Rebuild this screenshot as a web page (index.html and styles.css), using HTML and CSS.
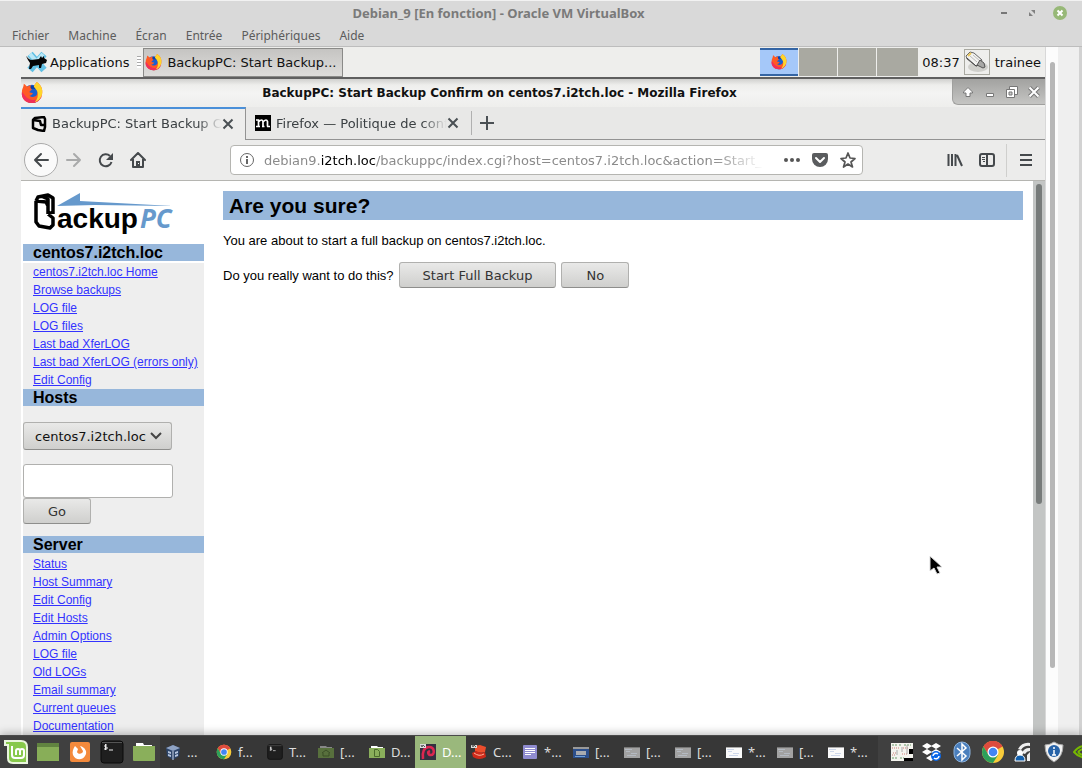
FILE: index.html
```html
<!DOCTYPE html>
<html lang="fr">
  <head>
    <meta charset="utf-8">
    <title>Debian_9 [En fonction] - Oracle VM VirtualBox</title>
    <link rel="stylesheet" href="styles.css">
  </head>

  <body>
    <!-- shared icons -->
    <svg class="defs" width="0" height="0">
      <symbol id="firefox" viewBox="0 0 24 24">
        <circle cx="12" cy="13" r="10" fill="#1a5fd0"/>
        <path d="M9 5c4-2 8 0 9 3-3-1-6-1-8 0z" fill="#0b3fa8"/>
        <path d="M3 2c2 1 3 3 4 3l4-2c-1 2-1 4 1 5l-3 3c1 1 3 1 4 1-1 3-4 3-4 3 4 3 9 1 9-4 0-4-3-5-4-6 1-3 3-4 3-5 5 3 7 8 6 13-1 6-6 10-11 10C5 23 0 18 1 11c0-4 2-5 2-9z" fill="#ff5a24"/>
        <path d="M1 11c-1 7 4 12 11 12 5 0 9-3 11-8-4 5-10 6-15 3-4-2-5-6-7-7z" fill="#f0305a"/>
        <path d="M14 5c1-3 3-4 3-5 5 3 7 8 6 13-1 4-4 8-8 9 3-3 4-7 3-11-1-3-3-4-4-6z" fill="#ffd52b"/>
      </symbol>
      <symbol id="chrome" viewBox="0 0 24 24">
        <circle cx="12" cy="12" r="11" fill="#f8cb3a"/>
        <path d="M12 12L2.500 6.500A11 11 0 0 1 21.500 6.500z" fill="#dd4b3e"/>
        <path d="M12 6.500h9.500A11 11 0 0 0 2.500 6.500L7 14z" fill="#dd4b3e"/>
        <path d="M2.500 6.500A11 11 0 0 0 12 23l5-8-5 2-5-3z" fill="#2da05a"/>
        <circle cx="12" cy="12" r="5.500" fill="#fff"/>
        <circle cx="12" cy="12" r="4.300" fill="#4285f4"/>
      </symbol>
      <symbol id="terminal" viewBox="0 0 24 24">
        <rect x="1" y="1" width="22" height="22" rx="3" fill="#1f1f1f" stroke="#0a0a0a"/>
        <path d="M2 2.500h20" stroke="#555"/>
        <path d="M7 5H5v2h2v2H4M5.500 4v6M9 10h4" fill="none" stroke="#eee"/>
      </symbol>
      <symbol id="window" viewBox="0 0 16 16">
        <path fill="#a2a2a2" d="M0 3h16v11H0z"/>
        <path d="M0 3.500h16" stroke="#777"/>
        <path d="M1 5.500h7M2 7.500h4M7 9.500h6M3 11.500h9" stroke="#b4bac2"/>
      </symbol>
      <symbol id="window-lit" viewBox="0 0 16 16">
        <path fill="#fafafa" d="M0 3h16v11H0z"/>
        <path d="M0 3.500h16" stroke="#aaa"/>
        <path d="M1 5.500h7M2 7.500h4M7 9.500h6M3 11.500h9" stroke="#cdd7ea"/>
      </symbol>
      <symbol id="close" viewBox="0 0 12 12">
        <path d="M1.500 1.500l9 9M10.500 1.500l-9 9" stroke="#4a5054" stroke-width="2"/>
      </symbol>
    </svg>

    <div class="screen">
      <header class="vm-header">
        <div class="vm-titlebar">
          <div class="vm-title">Debian_9 [En fonction] - Oracle VM VirtualBox</div>
          <div class="vm-buttons">
            <button aria-label="Réduire"><svg width="14" height="14" viewBox="0 0 14 14"><path d="M4 7h6" stroke="#777" stroke-width="2"/></svg></button>
            <button aria-label="Agrandir"><svg width="14" height="14" viewBox="0 0 14 14"><path d="M6 4h4v4zM4 6v4h4z" fill="#808080"/></svg></button>
            <button aria-label="Fermer"><svg width="14" height="14" viewBox="0 0 14 14"><circle cx="7" cy="7" r="7" fill="#97b877"/><path d="M4.500 4.500l5 5M9.500 4.500l-5 5" stroke="#fff" stroke-width="2"/></svg></button>
          </div>
        </div>
        <nav class="vm-menu">
          <a href="#">Fichier</a>
          <a href="#">Machine</a>
          <a href="#">Écran</a>
          <a href="#">Entrée</a>
          <a href="#">Périphériques</a>
          <a href="#">Aide</a>
        </nav>
      </header>

      <div class="vm-body">
        <div class="guest">
          <!-- xfce panel -->
          <div class="panel">
            <button class="app-menu">
              <svg width="24" height="24" viewBox="0 0 24 24">
                <path d="M5 4l14 16M19 4L5 20" stroke="#62c0e4" stroke-width="7"/>
                <path d="M5 4l6 7M18 4l-5 6" stroke="#b9e8f7" stroke-width="4"/>
                <path d="M1 6l3 3 2 1 8-1 2-3 1 2 2-2v2l3 2-1 3-4 1-1 4h-2v-3l-6 1-2 3H4l1-6-2-3z" fill="#050505"/>
              </svg>
              Applications
            </button>
            <span class="handle"></span>
            <button class="panel-task">
              <svg width="17" height="17"><use href="#firefox"/></svg>
              BackupPC: Start Backup...
            </button>
            <div class="pager">
              <span class="desk current"><svg width="16" height="16"><use href="#firefox"/></svg></span>
              <span class="desk"></span>
              <span class="desk"></span>
              <span class="desk"></span>
            </div>
            <span class="clock">08:37</span>
            <span class="plug">
              <svg width="24" height="24" viewBox="0 0 24 24">
                <ellipse cx="13" cy="17" rx="10" ry="5" fill="#cfcfcb"/>
                <path d="M1 6l4-4 4 1 8 7-3 5-3 1-9-7z" fill="#f2f2f0" stroke="#666"/>
                <path d="M2 8l9 8 3-1" fill="none" stroke="#444"/>
                <path d="M5 6l7 6M8 5l7 6" stroke="#bbb"/>
                <path d="M15 10l4 3 1 4-2 1-6-3z" fill="#a8a8a6" stroke="#555"/>
                <path d="M3 6l3-3" stroke="#e8c65a" stroke-width="2"/>
              </svg>
            </span>
            <span class="user">trainee</span>
          </div>

          <!-- firefox window -->
          <div class="win-titlebar">
            <svg class="win-icon" width="22" height="22"><use href="#firefox"/></svg>
            <div class="win-title">BackupPC: Start Backup Confirm on centos7.i2tch.loc - Mozilla Firefox</div>
            <div class="win-buttons">
              <svg width="14" height="14" viewBox="0 0 14 14"><path d="M7 2.500l4.500 4.500v1H9v3.500H5V8H2.500V7z" fill="#fff" stroke="#777"/></svg>
              <svg width="14" height="14" viewBox="0 0 14 14"><path d="M3.500 8.500h7v3h-7z" fill="#fff" stroke="#777"/></svg>
              <svg width="14" height="14" viewBox="0 0 14 14"><path d="M4.500 1.500h8v8h-8z" fill="#fff" stroke="#777"/><path d="M1.500 4.500h8v8h-8z" fill="#fff" stroke="#777"/><path d="M4 7h3v3H4z" fill="#ccc" stroke="#777"/></svg>
              <svg width="14" height="14" viewBox="0 0 14 14"><path d="M2.500 2.500l9 9M11.500 2.500l-9 9" stroke="#777" stroke-width="4"/><path d="M2.500 2.500l9 9M11.500 2.500l-9 9" stroke="#fff" stroke-width="2"/></svg>
            </div>
          </div>

          <div class="tabs">
            <div class="tab active">
              <svg width="16" height="16" viewBox="0 0 16 16"><path d="M2 4l2-2 9-1 1 2v8l-1 4-6-1-5-2zM2 4l7 1 1 4h3" fill="none" stroke="#000" stroke-width="2.500" stroke-linejoin="round"/></svg>
              <span class="tab-label">BackupPC: Start Backup C</span>
              <button aria-label="Fermer l'onglet"><svg width="12" height="12"><use href="#close"/></svg></button>
            </div>
            <div class="tab">
              <svg width="16" height="16" viewBox="0 0 16 16"><path d="M0 0h16v16H0z"/><path d="M1 5h2.500v6M1 11.500h4M4 6.500q3-3 4 0v5M7 11.500h2.500M8.500 6.500q3-3 4 0v5M12 11.500h3" fill="none" stroke="#fff" stroke-width="1.700"/></svg>
              <span class="tab-label">Firefox — Politique de conf</span>
              <button aria-label="Fermer l'onglet"><svg width="12" height="12"><use href="#close"/></svg></button>
            </div>
            <div class="tab-rest">
              <button class="new-tab" aria-label="Nouvel onglet"><svg width="14" height="14" viewBox="0 0 14 14"><path d="M7 0v14M0 7h14" stroke="#4a5054" stroke-width="2"/></svg></button>
            </div>
          </div>

          <div class="toolbar">
            <button class="tool back" aria-label="Précédent"><svg width="16" height="16" viewBox="0 0 16 16"><path d="M15 8H2M8 2L2 8l6 6" fill="none" stroke="#45494c" stroke-width="2" stroke-linejoin="round" stroke-linecap="round"/></svg></button>
            <button class="tool" aria-label="Suivant"><svg width="16" height="16" viewBox="0 0 16 16"><path d="M1 8h13M8 2l6 6-6 6" fill="none" stroke="#a9aaaa" stroke-width="2" stroke-linejoin="round" stroke-linecap="round"/></svg></button>
            <button class="tool" aria-label="Actualiser"><svg width="16" height="16" viewBox="0 0 16 16"><path d="M13.500 10A6 6 0 1 1 12 4" fill="none" stroke="#45494c" stroke-width="2"/><path d="M15 1v7H8z" fill="#45494c"/></svg></button>
            <button class="tool" aria-label="Accueil"><svg width="16" height="16" viewBox="0 0 16 16"><path d="M1 8l7-7 7 7M3 7v8h10V7" fill="none" stroke="#45494c" stroke-width="2" stroke-linejoin="round" stroke-linecap="round"/><path d="M6 9h4v5H6z" fill="#45494c"/><path d="M8 11h1v1H8z" fill="#fff"/></svg></button>

            <div class="urlbar">
              <svg width="16" height="16" viewBox="0 0 16 16"><circle cx="8" cy="8" r="6.500" fill="none" stroke="#666"/><path d="M8 4v2M8 7v5" stroke="#666" stroke-width="2"/></svg>
              <a class="url" href="#">debian9.<b>i2tch.loc</b>/backuppc/index.cgi?host=centos7.i2tch.loc&amp;action=Start_</a>
              <svg width="16" height="16" viewBox="0 0 16 16"><circle cx="2" cy="8" r="2" fill="#555"/><circle cx="8" cy="8" r="2" fill="#555"/><circle cx="14" cy="8" r="2" fill="#555"/></svg>
              <svg width="16" height="16" viewBox="0 0 16 16"><path d="M2 1h12q2 0 2 2v4a8 8 0 0 1-16 0V3q0-2 2-2z" fill="#5a5c5e"/><path d="M4 6l4 4 4-4" fill="none" stroke="#fff" stroke-width="2" stroke-linecap="round" stroke-linejoin="round"/></svg>
              <svg width="16" height="16" viewBox="0 0 16 16"><path d="M8 1l2 5 5 .5-4 3.500 1.500 5L8 12l-4.500 3L5 10 1 6.500 6 6z" fill="none" stroke="#555" stroke-width="1.700" stroke-linejoin="round"/></svg>
            </div>

            <button class="tool" aria-label="Bibliothèque"><svg width="16" height="16" viewBox="0 0 16 16"><path d="M1.500 2v12M5 2v12M8.500 2v12M10 3l5 11" stroke="#45494c" stroke-width="2"/></svg></button>
            <button class="tool" aria-label="Barre latérale"><svg width="16" height="16" viewBox="0 0 16 16"><rect x="1" y="2" width="14" height="12" rx="2" fill="none" stroke="#45494c" stroke-width="2"/><path d="M8 2v12" stroke="#45494c" stroke-width="2"/><path d="M3 5.500h3M3 7.500h3M4 9.500h2" stroke="#45494c"/></svg></button>
            <span class="tool-sep"></span>
            <button class="tool" aria-label="Menu"><svg width="16" height="16" viewBox="0 0 16 16"><path d="M2 3h12M2 8h12M2 13h12" stroke="#45494c" stroke-width="2"/></svg></button>
          </div>

          <div class="page">
            <aside class="sidebar">
              <svg class="logo" width="142" height="44" viewBox="0 0 142 44">
                <path d="M24 14L47 1v8l93 5-78-1z" fill="#6699cc"/>
                <path d="M3 9l2-4 10-2 5 3v16M3 9v21l3 4 11 2 3-3v-7l-5-4M3 9l10 1 2 4v8M15 22l5-2M8 4l7 3v7" fill="none" stroke="#000" stroke-width="3.500" stroke-linejoin="round"/>
                <text class="logo-name" x="24" y="36">ackup</text>
                <text class="logo-pc" x="107" y="36">PC</text>
              </svg>
              <h2 class="nav-title host">centos7.i2tch.loc</h2>
              <ul class="nav-links">
                <li><a href="#">centos7.i2tch.loc Home</a></li>
                <li><a href="#">Browse backups</a></li>
                <li><a href="#">LOG file</a></li>
                <li><a href="#">LOG files</a></li>
                <li><a href="#">Last bad XferLOG</a></li>
                <li><a href="#">Last bad XferLOG (errors only)</a></li>
                <li><a href="#">Edit Config</a></li>
              </ul>
              <h2 class="nav-title">Hosts</h2>
              <form class="host-form">
                <div class="select-wrap">
                  <select aria-label="Select a host">
                    <option>centos7.i2tch.loc</option>
                  </select>
                  <svg width="12" height="8" viewBox="0 0 12 8"><path d="M1 1l5 5 5-5" fill="none" stroke="#444" stroke-width="2"/></svg>
                </div>
                <input type="text" aria-label="Host name">
                <button class="btn" type="button">Go</button>
              </form>
              <h2 class="nav-title">Server</h2>
              <ul class="nav-links server">
                <li><a href="#">Status</a></li>
                <li><a href="#">Host Summary</a></li>
                <li><a href="#">Edit Config</a></li>
                <li><a href="#">Edit Hosts</a></li>
                <li><a href="#">Admin Options</a></li>
                <li><a href="#">LOG file</a></li>
                <li><a href="#">Old LOGs</a></li>
                <li><a href="#">Email summary</a></li>
                <li><a href="#">Current queues</a></li>
                <li><a href="#">Documentation</a></li>
              </ul>
            </aside>

            <main class="content">
              <h1>Are you sure?</h1>
              <p>You are about to start a full backup on centos7.i2tch.loc.</p>
              <form class="confirm">
                <span>Do you really want to do this?</span>
                <button class="btn" type="button">Start Full Backup</button>
                <button class="btn" type="button">No</button>
              </form>
            </main>

            <div class="page-scroll"><span class="thumb"></span></div>

            <svg class="cursor" width="14" height="22" viewBox="0 0 14 22"><path d="M1 1v15l4-3 3 6 3-1-3-6h5z" stroke="#ddd"/></svg>
          </div>
        </div>

        <div class="vm-scroll"><span class="thumb"></span></div>
        <div class="vm-edge"></div>
      </div>

      <footer class="taskbar">
        <div class="launchers">
          <svg width="24" height="24" viewBox="0 0 24 24"><path d="M1 1h16q6 0 6 6v16H9q-5 0-5-5V5H1z" fill="#87c94b" stroke="#e9f5dd" stroke-width="2"/><path d="M8 6v9q0 3 3 3h6q3 0 3-3v-4q0-2-2-2t-2 2v4M16 11q0-2-2-2t-2 2v4" fill="none" stroke="#fff" stroke-width="2"/></svg>
          <svg width="24" height="24" viewBox="0 0 24 24"><path d="M1 3h22v18H1z" fill="#88ae58"/><path d="M1 3h22v4H1z" fill="#618340"/></svg>
          <svg width="24" height="24" viewBox="0 0 24 24"><rect x="2" y="2" width="20" height="20" rx="2" fill="#f48a3c"/><path d="M7 6l3 3-1 3c1 3 6 2 6-1l-3-5c5 1 8 6 5 10-3 5-10 4-12-1-1-3 0-6 2-9z" fill="#fff"/></svg>
          <svg width="24" height="24"><use href="#terminal"/></svg>
          <svg width="24" height="24" viewBox="0 0 24 24"><path d="M4 7V3h7l1 2h8v3z" fill="#fff"/><path d="M1 6h22v14q0 1-1 1H2q-1 0-1-1z" fill="#8aaf5b"/></svg>
        </div>

        <div class="tasks">
          <button><svg width="16" height="16" viewBox="0 0 16 16"><path d="M1 4l7-3 7 3-1 8-6 4-6-4z" fill="#2c4468"/><path d="M1 4l7 3 7-3-7-3z" fill="#8fa3c4"/><path d="M8 7v9" stroke="#c8d4e8"/><path d="M3 7l3 1v2l-3-1zM3 10l3 1v2l-3-1zM13 7l-3 1v2l3-1zM13 10l-3 1v2l3-1z" fill="#b6c5de"/></svg><span>...</span></button>
          <button><svg width="16" height="16"><use href="#chrome"/></svg><span>f...</span></button>
          <button><svg width="16" height="16"><use href="#terminal"/></svg><span>T...</span></button>
          <button><svg width="16" height="16" viewBox="0 0 16 16"><path d="M2 4V2h6l1 1h5v2z" fill="#888"/><path d="M0 4h16v10H0z" fill="#58703d"/><path d="M4 9l4-3 4 3M5 9v3h6V9" fill="none" stroke="#3b4e27"/></svg><span>[...</span></button>
          <button><svg width="16" height="16" viewBox="0 0 16 16"><path d="M2 4V2h6l1 1h5v2z" fill="#fff"/><path d="M0 4h16v10H0z" fill="#8aaf5b"/><path d="M5.500 5.500h3l2 2v5h-5z" fill="none" stroke="#4a6a2b"/></svg><span>D...</span></button>
          <button class="active"><svg width="16" height="16" viewBox="0 0 16 16"><path d="M0 0h16v16H0z" fill="#323040"/><path d="M3 15C2 8 4 3 9 3c6 0 6 8 2 8-3 0-4-3-1-4" fill="none" stroke="#dc2750" stroke-width="2.500"/><path d="M0 0h6v4H0z" fill="#ddd"/><path d="M1 1l1 2 1-2 2 2" fill="none" stroke="#555"/></svg><span>D...</span></button>
          <button><svg width="16" height="16" viewBox="0 0 16 16"><path d="M4 2l5-1 6 2-1 5q-5 2-10-1z" fill="#ed4d2c"/><path d="M1 9l4-2q5 3 9 1l1 5q-7 4-13 0z" fill="#cf2a1a"/><path d="M3 9q5 4 10 1" fill="none" stroke="#ffb29a"/><path d="M0 1h6v3H0z" fill="#ddd"/><path d="M1 1l1 2 1-2 2 2" fill="none" stroke="#555"/></svg><span>C...</span></button>
          <button><svg width="16" height="16" viewBox="0 0 16 16"><rect x="1" y="1" width="14" height="14" rx="1" fill="#8f8bd0"/><path d="M3 4.500h10M3 6.500h10M3 8.500h10M3 10.500h6" stroke="#fff"/></svg><span>*...</span></button>
          <button><svg width="16" height="16" viewBox="0 0 16 16"><path d="M0 3h16v11H0z" fill="#2c4f8b"/><path d="M0 4h16" stroke="#999" stroke-width="2"/><path d="M3 7h10v4H3z" fill="#a8abb0"/><path d="M2 12.500h10" stroke="#6fa0d8"/></svg><span>[...</span></button>
          <button><svg width="16" height="16"><use href="#window"/></svg><span>[...</span></button>
          <button><svg width="16" height="16"><use href="#window"/></svg><span>[...</span></button>
          <button><svg width="16" height="16"><use href="#window-lit"/></svg><span>*...</span></button>
          <button><svg width="16" height="16"><use href="#window"/></svg><span>[...</span></button>
          <button><svg width="16" height="16"><use href="#window-lit"/></svg><span>*...</span></button>
        </div>

        <div class="tray">
          <svg width="22" height="22" viewBox="0 0 22 22"><path d="M0 2h22v18H0z" fill="#f4f4ee"/><path d="M1 4h5M8 4h3M13 4h7M1 17h6M9 17h4" stroke="#6b9a6b" stroke-dasharray="2 1"/><path d="M1 7h8M12 7h6M2 12h4M11 13h5M1 14h3" stroke="#cf7f78" stroke-dasharray="1 1"/><path d="M6 9v5M11 6v5M16 4v9" stroke="#aaa"/><path d="M18 8h4v5h-4zM13 17h9v3h-9z"/></svg>
          <svg width="22" height="22" viewBox="0 0 22 22"><path d="M6 2l5 3-5 3-5-3zM15 2l5 3-5 3-5-3zM6 8l5 3-5 3-5-3zM15 8l5 3-5 3-5-3zM10 14l5 3-5 3-5-3z" fill="#fff"/><circle cx="15" cy="15" r="5" fill="#0b68e8"/><path d="M12 15a3 3 0 0 1 5-2M18 15a3 3 0 0 1-5 2" fill="none" stroke="#fff" stroke-width="1.500"/></svg>
          <svg width="22" height="22" viewBox="0 0 22 22"><rect x="3" y="1" width="16" height="20" rx="8" fill="#4a7fbd" stroke="#8cb2dc"/><path d="M6 7l9 8-4 4V3l4 4-9 8" fill="none" stroke="#fff" stroke-width="1.500"/></svg>
          <svg width="24" height="24"><use href="#chrome"/></svg>
          <svg width="22" height="22" viewBox="0 0 22 22"><path d="M5 8a12 12 0 0 1 12-6v3a9 9 0 0 0-9 4zM9 12a8 8 0 0 1 8-5v3a6 6 0 0 0-5 3zM14 20v-6l3-3v9z" fill="#eee"/><circle cx="7" cy="12" r="3" fill="#fff"/><path d="M2 20q0-6 5-6t5 6z" fill="#1260ad" stroke="#fff"/></svg>
          <svg width="22" height="22" viewBox="0 0 22 22"><path d="M11 1q4 3 9 3 0 12-9 17Q2 16 2 4q5 0 9-3z" fill="#f2f2f2" stroke="#aaa"/><circle cx="11" cy="10" r="6" fill="#2763a8"/><path d="M11 6v2M11 9v5M9 14h4" stroke="#fff" stroke-width="1.500"/></svg>
          <svg width="22" height="22" viewBox="0 0 22 22"><path d="M1 11q5-7 14-6v12Q6 17 1 11zM5 11q4-4 8-3M5 11q4 4 8 3" fill="none" stroke="#76b900" stroke-width="2"/></svg>
        </div>
      </footer>
    </div>
  </body>
</html>
```

FILE: styles.css
```css
* {
  box-sizing: border-box;
}

body {
  margin: 0;
  font-family: "DejaVu Sans", sans-serif;
  font-size: 13px;
  color: #111;
}

button {
  padding: 0;
  border: none;
  background: none;
  font: inherit;
  color: inherit;
}

a {
  color: inherit;
  text-decoration: none;
}

svg {
  display: block;
  flex-shrink: 0;
}

.defs {
  position: absolute;
}

.screen {
  display: flex;
  flex-direction: column;
  height: 100vh;
  overflow: hidden;
  background: #efefef;
}

/* VirtualBox window */
.vm-header {
  background: #d9d9d9;
  border-top: 1px solid #f2f2f2;
  border-bottom: 1px solid #bdbdbd;
  font-family: "Noto Sans", sans-serif;
  font-size: 12px;
}

.vm-titlebar {
  display: flex;
  align-items: center;
  height: 24px;
  padding-right: 15px;
}

.vm-title {
  flex: 1;
  text-align: center;
  font-size: 13px;
  font-weight: bold;
  color: #7a7a7a;
}

.vm-buttons {
  display: flex;
  gap: 14px;
}

.vm-menu {
  display: flex;
  align-items: center;
  gap: 19px;
  height: 21px;
  padding-left: 12px;
  color: #5c5c5c;
}

.vm-body {
  flex: 1;
  display: flex;
  min-height: 0;
  padding-left: 21px;
}

.guest {
  flex: 1;
  display: flex;
  flex-direction: column;
  min-width: 0;
  background: #fff;
}

.vm-scroll {
  width: 13px;
  padding: 15px 3px 0 4px;
  background: #fcfcfc;
  border-left: 1px solid #d8d8d8;
}

.thumb {
  display: block;
  border-radius: 3px;
}

.vm-scroll .thumb {
  height: 90%;
  background: #b7b7b7;
}

.vm-edge {
  width: 24px;
  border-right: 3px solid #d2d2d2;
}

/* xfce panel */
.panel {
  display: flex;
  align-items: center;
  height: 32px;
  padding: 0 4px;
  background: #eeeeec;
  border-bottom: 2px solid #5f5f5f;
}

.app-menu {
  display: flex;
  align-items: center;
  gap: 1px;
}

.handle {
  width: 4px;
  height: 12px;
  margin: 0 2px 0 8px;
  background: repeating-linear-gradient(#aaa 0 1px, #fff 1px 3px);
}

.panel-task {
  display: flex;
  align-items: center;
  gap: 5px;
  width: 200px;
  height: 29px;
  padding-left: 1px;
  border: 1px solid #8a8a88;
  background: linear-gradient(#c5c4c2, #dddcda);
  white-space: nowrap;
}

.pager {
  display: flex;
  gap: 1px;
  height: 28px;
  margin-left: auto;
}

.desk {
  display: flex;
  align-items: center;
  justify-content: center;
  width: 38px;
  background: #a9a9a1;
}

.desk:last-child {
  width: 41px;
}

.desk.current {
  background: #a5c8f9;
  border-top: 2px solid #3465a4;
  border-bottom: 2px solid #3465a4;
}

.clock {
  margin-left: 4px;
}

.plug {
  margin: 0 5px 0 4px;
  border: 1px solid #a9a9a1;
}

/* window title */
.win-titlebar {
  display: flex;
  align-items: center;
  height: 28px;
  background: linear-gradient(#d0d0ce, #eeeeec 6px, #f4f4f3 14px, #eeeeec);
}

.win-title {
  flex: 1;
  padding-left: 4px;
  text-align: center;
  font-size: 12px;
  font-weight: bold;
}

.win-buttons {
  display: flex;
  align-items: center;
  align-self: flex-start;
  gap: 8px;
  height: 26px;
  padding: 0 4px 0 8px;
  background: linear-gradient(#a2a2a0, #c5c5c3);
  border: 1px solid #a0a09e;
  border-width: 0 0 1px 1px;
  border-bottom-left-radius: 6px;
}

/* tabs */
.tabs {
  display: flex;
  height: 33px;
  background: #e8e8e7;
}

.tab {
  display: flex;
  align-items: center;
  width: 225px;
  padding: 0 12px 0 9px;
  border-bottom: 1px solid #939393;
  color: #3b4043;
}

.tab.active {
  padding: 0 11px 2px 10px;
  background: #ededec;
  border-top: 2px solid #4a90d9;
  border-right: 1px solid #939393;
  border-bottom: none;
}

.tab-label {
  flex: 1;
  margin-left: 5px;
  overflow: hidden;
  white-space: nowrap;
  mask-image: linear-gradient(to left, transparent, #000 25px);
}

.tab-rest {
  flex: 1;
  display: flex;
  align-items: center;
  border-bottom: 1px solid #939393;
}

.new-tab {
  padding: 5px 8px;
  border-left: 1px solid #b0b0b0;
}

/* toolbar */
.toolbar {
  display: flex;
  align-items: center;
  height: 41px;
  padding: 0 3px;
  background: #ececeb;
  border-bottom: 1px solid #b5b5b1;
}

.tool {
  display: flex;
  align-items: center;
  justify-content: center;
  width: 32px;
  height: 32px;
}

.tool.back {
  width: 34px;
  height: 34px;
  border: 1px solid #aaa;
  border-radius: 50%;
  background: #fafafa;
}

.urlbar {
  flex: 1;
  display: flex;
  align-items: center;
  gap: 12px;
  min-width: 0;
  height: 30px;
  margin: 0 76px;
  padding: 0 6px 0 8px;
  background: #fff;
  border: 1px solid #b5b5b1;
  border-radius: 4px;
}

.url {
  flex: 1;
  margin-left: -3px;
  margin-right: 8px;
  overflow: hidden;
  white-space: nowrap;
  color: #8b8b8b;
  mask-image: linear-gradient(to left, transparent, #000 50px);
}

.url b {
  font-weight: normal;
  color: #000;
}

.tool-sep {
  width: 1px;
  height: 33px;
  margin: 0 3px;
  background: #cfcfcd;
}

/* BackupPC page */
.page {
  flex: 1;
  position: relative;
  display: flex;
  min-height: 0;
  overflow: hidden;
  font-family: "Liberation Sans", sans-serif;
  font-size: 13px;
  color: #000;
}

.sidebar {
  width: 181px;
  margin-left: 2px;
}

.logo {
  margin: 11px 0 8px 10px;
}

.logo-name {
  font: bold 28px "Liberation Sans", sans-serif;
}

.logo-pc {
  font: italic bold 26px "Open Sans", sans-serif;
  fill: #6699cc;
}

.nav-title {
  margin: 0;
  padding-left: 10px;
  background: #97b7db;
  font-size: 16px;
  line-height: 17px;
}

.nav-title.host {
  margin-bottom: 2px;
}

.nav-links {
  margin: 0;
  padding: 0 0 0 10px;
  list-style: none;
  background: #eee;
  font-size: 12px;
  line-height: 18px;
}

.nav-links.server {
  padding-top: 2px;
  padding-bottom: 20px;
}

.nav-links a {
  color: #3333ff;
  text-decoration: underline;
}

.host-form {
  display: flex;
  flex-direction: column;
  align-items: flex-start;
  padding: 16px 0 12px;
  background: #eee;
}

.btn,
select {
  border: 1px solid #b0b0ae;
  border-bottom-color: #8e8e8c;
  border-radius: 3px;
  background: linear-gradient(#e9e9e8, #cfcfcd);
  font: 13px "DejaVu Sans", sans-serif;
  color: #333;
}

.btn {
  min-width: 68px;
  height: 26px;
  padding: 0 23px;
}

.select-wrap {
  display: grid;
  align-items: center;
  width: 149px;
  margin-bottom: 14px;
}

.select-wrap select,
.select-wrap svg {
  grid-area: 1 / 1;
}

.select-wrap svg {
  justify-self: end;
  margin-right: 10px;
  pointer-events: none;
}

select {
  appearance: none;
  height: 28px;
  padding: 0 0 0 11px;
  color: #111;
}

.host-form input {
  width: 150px;
  height: 34px;
  border: 1px solid #b0b0ae;
  border-radius: 3px;
  background: #fff;
}

.content {
  flex: 1;
  padding: 10px 10px 0 19px;
}

.content h1 {
  margin: 0 0 13px;
  padding-left: 6px;
  background: #97b7db;
  font-size: 21px;
  line-height: 29px;
}

.content p {
  margin: 0 0 13px;
  line-height: 16px;
}

.confirm {
  display: flex;
  align-items: center;
  gap: 5px;
}

.page-scroll {
  width: 12px;
  padding: 3px 3px 0;
  background: #c3c5c4;
}

.page-scroll .thumb {
  height: 58%;
  background: #777b7a;
}

.cursor {
  position: absolute;
  left: 908px;
  top: 374px;
}

/* host taskbar */
.taskbar {
  position: relative;
  display: flex;
  height: 33px;
  background: #404040;
  border-top: 1px solid #4a4a4a;
  box-shadow: 0 -2px 8px rgba(0, 0, 0, 0.25);
  font: 13px "Noto Sans", sans-serif;
  color: #ddd;
}

.launchers {
  display: flex;
  align-items: center;
  gap: 8px;
  padding: 0 4px;
}

.tasks {
  flex: 1;
  display: flex;
  background: #373737;
}

.tasks button {
  flex: 0 0 51px;
  display: flex;
  align-items: center;
  gap: 6px;
  padding-left: 5px;
}

.tasks button.active {
  background: #9ab87c;
  color: #fff;
}

.tray {
  display: flex;
  align-items: center;
  gap: 8px;
  width: 204px;
  padding-left: 13px;
  overflow: hidden;
}
```
